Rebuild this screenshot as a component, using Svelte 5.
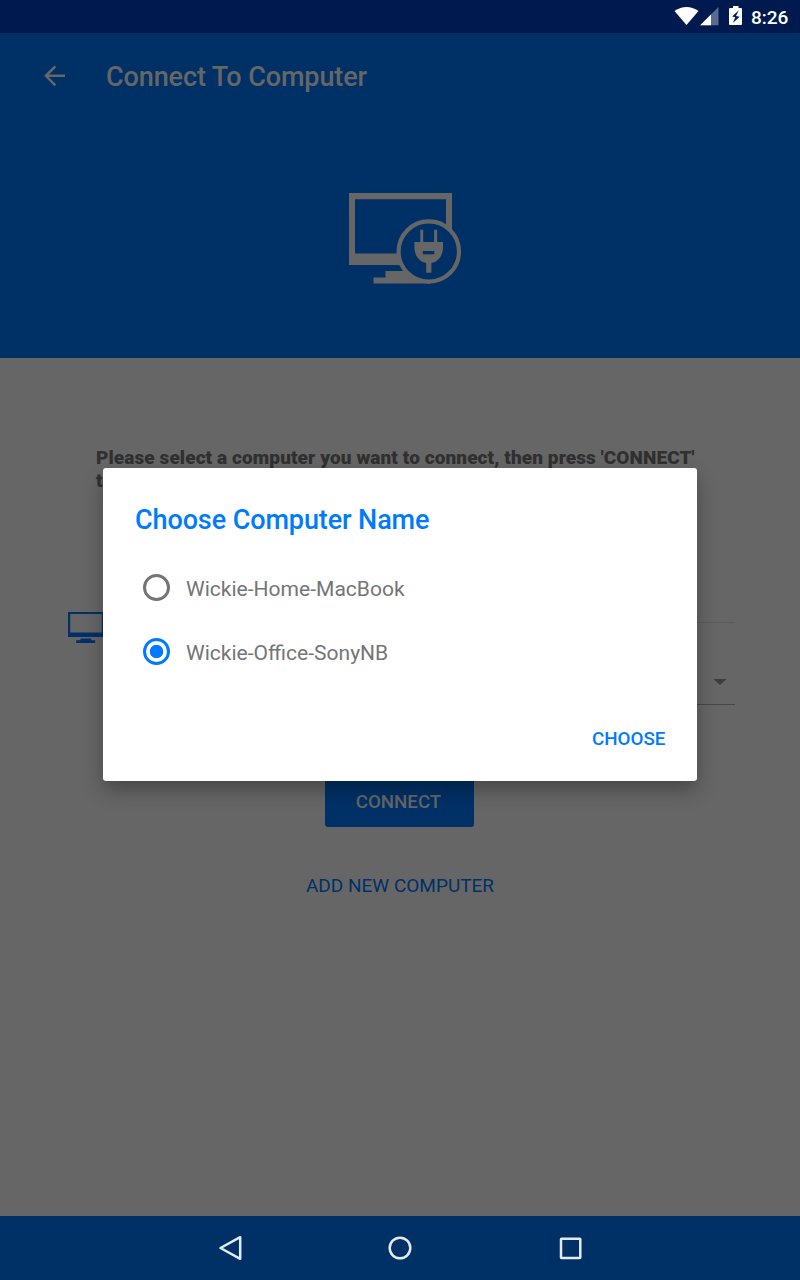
<script>
  const computers = ['Wickie-Home-MacBook', 'Wickie-Office-SonyNB'];
  let selected = $state(1);
</script>

<div class="screen">
  <div class="status">
    <svg class="signals" width="72" height="33" viewBox="0 0 72 33">
      <path d="M1.500 11Q13.500 2.800 25.500 11L13.500 25Z" fill="#fff" />
      <path d="M45.500 7V25.300H27.200Z" fill="#596b91" />
      <path d="M38 14.500V25.300H27.200Z" fill="#fff" />
      <path d="M57 8h3V6h5.500V8H68q1 0 1 1V24q0 1-1 1H57q-1 0-1-1V9q0-1 1-1Z" fill="#fff" />
      <path d="M65.800 10.300l-6.600 6.200 3.100.8-2.500 5.700 6.800-6.300-3.600-.8Z" fill="#001a50" />
    </svg>
    <span class="clock">8:26</span>
  </div>

  <header>
    <div class="toolbar">
      <svg width="22" height="22" viewBox="0 0 22 22" fill="none" stroke="#666" stroke-width="2.500">
        <path d="M21 10.800H2.300M11.300 1.300L1.900 10.800l9.400 9.500" />
      </svg>
      <h1>Connect To Computer</h1>
    </div>
    <svg class="hero" width="114" height="94" viewBox="0 0 114 94">
      <path d="M1 1H104V73H1ZM7 7.200V61.500H98V7.200Z" fill="#666" fill-rule="evenodd" />
      <path d="M37.500 79H62V80H82V91.500H25.500V85.500H37.500Z" fill="#666" />
      <circle cx="80.800" cy="59.500" r="30.200" fill="#003166" stroke="#666" stroke-width="4.200" />
      <path d="M72.300 37.800h2.900V50h10.900V37.800h3.100V50h5.800v5.500c0 8.500-5.200 14.500-11.600 15.500v9.800h-5.200V71c-6.500-1-11.800-7-11.800-15.500V50h5.900Z" fill="#666" />
      <path d="M74.800 59h11.500v3.300h-11.500Z" fill="#003166" />
    </svg>
  </header>

  <main>
    <p>Please select a computer you want to connect, then press 'CONNECT'<br />to continue.</p>
    <div class="chooser">
      <svg width="37" height="32" viewBox="0 0 37 32" fill="#003166">
        <path fill-rule="evenodd" d="M0 0H36V25H0ZM2.200 2V20.500H33.800V2Z" />
        <path d="M12.500 26.500h10.700v1.800h4v2.700H8.200v-2.700h4.300Z" />
      </svg>
      <div class="fields">
        <div class="rule"></div>
        <div class="spinner"><i></i></div>
      </div>
    </div>
    <button class="connect">CONNECT</button>
    <button class="add">ADD NEW COMPUTER</button>
  </main>

  <nav>
    <svg width="26" height="28" viewBox="0 0 26 28"><path d="M3.500 14L23.200 3.200V24.800Z" /></svg>
    <svg width="26" height="28" viewBox="0 0 26 28"><circle cx="13" cy="14" r="10.300" /></svg>
    <svg width="26" height="28" viewBox="0 0 26 28"><rect x="4" y="4.700" width="19.300" height="19.300" rx=".5" /></svg>
  </nav>

  <section class="dialog" role="dialog">
    <h2>Choose Computer Name</h2>
    {#each computers as name, i}
      <button class="option" onclick={() => (selected = i)}>
        <span class="radio" class:on={selected === i}></span>
        <span>{name}</span>
      </button>
    {/each}
    <button class="choose">CHOOSE</button>
  </section>
</div>

<style>
  :global(body) { margin: 0; }
  .screen {
    position: relative;
    width: 800px;
    height: 1280px;
    overflow: hidden;
    display: flex;
    flex-direction: column;
    background: #666;
    font-family: Roboto, sans-serif;
  }
  svg { display: block; flex: none; }
  button {
    border: 0;
    padding: 0;
    background: none;
    font-family: inherit;
  }
  .status {
    height: 33px;
    flex: none;
    display: flex;
    justify-content: flex-end;
    background: #001a50;
    color: #fff;
  }
  .clock {
    width: 55px;
    padding-left: 6px;
    box-sizing: border-box;
    font-size: 19px;
    font-weight: 500;
    line-height: 36px;
  }
  header {
    height: 325px;
    flex: none;
    background: #003166;
    color: #666;
  }
  .toolbar {
    height: 85px;
    display: flex;
    align-items: center;
    padding-left: 44px;
    gap: 40px;
  }
  h1, h2 {
    margin: 0;
    font-size: 27px;
    font-weight: 500;
    letter-spacing: -.1px;
    line-height: 32px;
  }
  h1 { padding-top: 3px; }
  .hero { margin: 74px 0 0 348px; }
  main {
    flex: 1;
    display: flex;
    flex-direction: column;
    align-items: center;
  }
  p {
    align-self: stretch;
    margin: 88px 0 0 96px;
    color: #303030;
    font-size: 19px;
    font-weight: 900;
    letter-spacing: .1px;
    line-height: 23px;
    white-space: nowrap;
  }
  .chooser {
    align-self: stretch;
    height: 93px;
    margin: 120px 65px 0 68px;
    display: flex;
    gap: 31px;
  }
  .fields { flex: 1; padding-top: 10px; }
  .rule { height: 1px; background: #5b5b5b; }
  .spinner {
    height: 82px;
    box-sizing: border-box;
    border-bottom: 1px solid #484848;
    display: flex;
    justify-content: flex-end;
    padding: 56px 8.500px 0 0;
  }
  .spinner i {
    width: 13px;
    height: 6px;
    background: #3d3d3d;
    clip-path: polygon(0 0, 100% 0, 50% 100%);
  }
  .connect {
    width: 149px;
    height: 51px;
    margin: 71px 1px 0 0;
    padding: 1px 2px 0 0;
    border-radius: 3px;
    background: #003166;
    color: #666;
    font-size: 18.700px;
    font-weight: 500;
    line-height: 50px;
  }
  .add {
    margin-top: 48px;
    color: #003166;
    font-size: 19px;
    line-height: 22px;
  }
  nav {
    height: 64px;
    flex: none;
    display: flex;
    justify-content: center;
    align-items: center;
    gap: 144px;
    background: #003166;
  }
  nav svg {
    fill: none;
    stroke: #e5eaf0;
    stroke-width: 2.500;
    stroke-linejoin: round;
  }
  .dialog {
    position: absolute;
    left: 103px;
    top: 468px;
    width: 594px;
    height: 313px;
    box-sizing: border-box;
    padding: 36px 31px 0 32px;
    display: flex;
    flex-direction: column;
    align-items: flex-start;
    border-radius: 3px;
    background: #fff;
    box-shadow: 0 9px 20px rgba(0, 0, 0, .3);
  }
  h2 { color: #007bff; }
  .option {
    height: 64px;
    display: flex;
    align-items: center;
    gap: 16px;
    padding-left: 8px;
    color: #757575;
    font-size: 21.050px;
  }
  h2 + .option { margin-top: 19px; }
  .option span:last-child { padding-top: 2px; }
  .radio {
    width: 27px;
    height: 27px;
    box-sizing: border-box;
    border: 3px solid #757575;
    border-radius: 50%;
  }
  .radio.on {
    border-color: #007bff;
    background: radial-gradient(circle, #007bff 6.300px, transparent 7.100px);
  }
  .choose {
    align-self: flex-end;
    margin: 45px .6px 0 0;
    color: #007bff;
    font-size: 18.800px;
    font-weight: 500;
    line-height: 22px;
  }
</style>
